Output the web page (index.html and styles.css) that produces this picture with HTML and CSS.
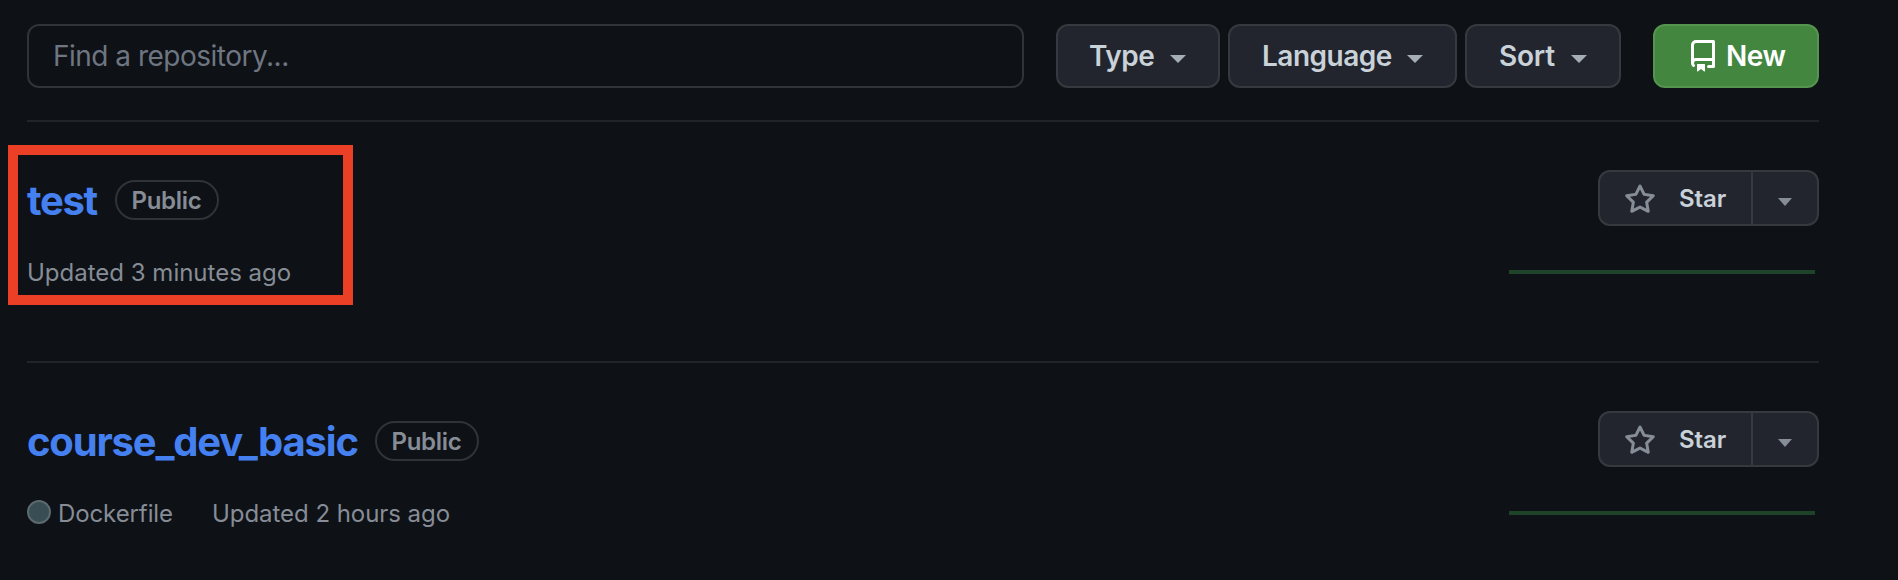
FILE: index.html
```html
<!DOCTYPE html>
<html lang="en">
<head>
<meta charset="utf-8">
<title>Repositories</title>
<link rel="stylesheet" href="styles.css">
</head>
<body>
<svg class="defs" aria-hidden="true">
  <symbol id="star" viewBox="0 0 16 16"><path fill-rule="evenodd" d="M8 .25a.75.75 0 01.673.418l1.882 3.815 4.21.612a.75.75 0 01.416 1.279l-3.046 2.97.719 4.192a.75.75 0 01-1.088.791L8 12.347l-3.766 1.98a.75.75 0 01-1.088-.79l.72-4.194L.818 6.374a.75.75 0 01.416-1.28l4.21-.611L7.327.668A.75.75 0 018 .25zm0 2.445L6.615 5.5a.75.75 0 01-.564.41l-3.097.45 2.24 2.184a.75.75 0 01.216.664l-.528 3.084 2.769-1.456a.75.75 0 01.698 0l2.77 1.456-.53-3.084a.75.75 0 01.216-.664l2.24-2.183-3.096-.45a.75.75 0 01-.564-.41L8 2.694v.001z"/></symbol>
  <symbol id="repo" viewBox="0 0 16 16"><path fill-rule="evenodd" d="M2 2.5A2.5 2.5 0 014.5 0h8.75a.75.75 0 01.75.75v12.5a.75.75 0 01-.75.75h-2.5a.75.75 0 110-1.500h1.750v-2h-8a1 1 0 00-.714 1.700.75.75 0 01-1.072 1.050A2.495 2.495 0 012 11.500v-9zm10.500-1V9h-8c-.356 0-.694.074-1 .208V2.500a1 1 0 011-1h8zM5 12.250v3.250a.25.25 0 00.400.200l1.450-1.087a.25.25 0 01.300 0L8.600 15.700a.25.25 0 00.400-.200v-3.250a.25.25 0 00-.250-.250h-3.500a.25.25 0 00-.250.250z"/></symbol>
</svg>
<main class="page">
  <form class="toolbar">
    <input class="search" type="search" placeholder="Find a repository..." aria-label="Find a repository">
    <div class="filters">
      <button type="button" class="btn type"><span>Type</span><i class="caret"></i></button>
      <button type="button" class="btn language"><span>Language</span><i class="caret"></i></button>
      <button type="button" class="btn sort"><span>Sort</span><i class="caret"></i></button>
    </div>
    <button type="button" class="btn new"><svg class="repo-icon"><use href="#repo"/></svg><span>New</span></button>
  </form>
  <ul class="repos">
    <li class="repo">
      <div class="info">
        <h3 class="title"><a class="name short">test</a><span class="badge">Public</span></h3>
        <div class="meta"><span class="updated">Updated 3 minutes ago</span></div>
      </div>
      <div class="actions">
        <div class="star-group"><button class="star"><svg class="star-icon"><use href="#star"/></svg><span>Star</span></button><button class="more" aria-label="Lists"><i class="caret"></i></button></div>
        <div class="activity"></div>
      </div>
      <div class="highlight"></div>
    </li>
    <li class="repo">
      <div class="info">
        <h3 class="title"><a class="name">course_dev_basic</a><span class="badge">Public</span></h3>
        <div class="meta"><i class="dot"></i><span class="lang">Dockerfile</span><span class="updated">Updated 2 hours ago</span></div>
      </div>
      <div class="actions">
        <div class="star-group"><button class="star"><svg class="star-icon"><use href="#star"/></svg><span>Star</span></button><button class="more" aria-label="Lists"><i class="caret"></i></button></div>
        <div class="activity"></div>
      </div>
    </li>
  </ul>
</main>
</body>
</html>
```
FILE: styles.css
```css
* { box-sizing: border-box; }
body {
  margin: 0;
  height: 580px;
  overflow: hidden;
  background: #0e1116;
  color: #c9d1d9;
  font-family: Inter, "Liberation Sans", sans-serif;
}
.defs { position: absolute; width: 0; height: 0; }
.page { width: 1819px; padding: 24px 0 0 27px; }
button, input { font: inherit; margin: 0; }
.toolbar { display: flex; height: 64px; }
.search {
  width: 997px;
  height: 64px;
  padding: 0 0 0 24px;
  border: 2px solid #303338;
  border-radius: 12px;
  background: #0e1116;
  color: #c9d1d9;
  font-size: 28px;
  letter-spacing: -0.5px;
  appearance: none;
}
.search::placeholder { color: #6e7681; opacity: 1; }
.filters { display: flex; gap: 8px; margin: 0 32px; }
.btn {
  display: flex;
  align-items: center;
  height: 64px;
  padding: 0 32px;
  border: 2px solid #37393f;
  border-radius: 12px;
  background: #22252d;
  color: #c9d1d9;
  font-size: 28px;
  font-weight: 600;
  letter-spacing: -0.5px;
  justify-content: space-between;
}
.type { width: 164px; }
.type span { margin-left: -1px; }
.language { width: 229px; }
.sort { width: 156px; }
.sort span { letter-spacing: -0.2px; }
.caret {
  border: 8px solid transparent;
  border-top-color: #a5adb5;
  border-bottom: 0;
  margin-top: 6px;
}
.new {
  width: 166px;
  padding-right: 0;
  justify-content: flex-start;
  gap: 7px;
  background: #428640;
  border-color: #54944f;
  color: #fff;
}
.repo-icon { flex: none; width: 32px; height: 32px; fill: currentColor; }
.repos { list-style: none; margin: 32px 0 0; padding: 0; }
.repo {
  position: relative;
  display: flex;
  justify-content: space-between;
  height: 241px;
  padding-top: 48px;
  border-top: 2px solid #21242a;
}
.title { display: flex; align-items: center; height: 60px; margin: 1px 0 0; }
.name {
  color: #4580f0;
  font-size: 40px;
  font-weight: 700;
  letter-spacing: -1.18px;
  line-height: 60px;
  width: 332px;
}
.name.short { width: 72px; letter-spacing: -1.3px; }
.badge {
  width: 104px;
  height: 40px;
  margin: -2px 0 0 16px;
  border: 2px solid #303338;
  border-radius: 20px;
  color: #868d96;
  font-size: 24px;
  font-weight: 600;
  letter-spacing: -0.3px;
  line-height: 37px;
  text-indent: -1px;
  text-align: center;
}
.meta {
  display: flex;
  align-items: center;
  height: 36px;
  margin-top: 23px;
  color: #868d96;
  font-size: 24px;
}
.dot {
  width: 24px;
  height: 24px;
  margin: -2px 7px 0 0;
  border: 2px solid #5c696d;
  border-radius: 50%;
  background: #384d54;
}
.lang { width: 154px; letter-spacing: -0.1px; }
.dot ~ .updated { letter-spacing: -0.05px; }
.actions { display: flex; flex-direction: column; align-items: flex-end; }
.star-group {
  display: flex;
  width: 221px;
  height: 56px;
  border: 2px solid #37393f;
  border-radius: 12px;
  background: #22252d;
  overflow: hidden;
}
.star, .more { display: flex; align-items: center; padding: 0; border: 0; background: none; }
.star {
  width: 151px;
  padding-left: 24px;
  color: #c9d1d9;
  font-size: 24px;
  font-weight: 600;
  letter-spacing: -0.1px;
}
.star-icon { width: 32px; height: 32px; margin: 3px 23px 0 0; fill: #868d96; }
.more { flex: 1; justify-content: center; border-left: 2px solid #37393f; }
.more .caret { border-top-color: #868d96; border-width: 8px 7.500px 0; margin-top: 8px; }
.activity { width: 306px; height: 4px; margin: 44px 4px 0 0; background: #1d4329; }
.highlight {
  position: absolute;
  left: -19px;
  top: 23px;
  width: 345px;
  height: 160px;
  border: 10px solid #eb4026;
}
```
